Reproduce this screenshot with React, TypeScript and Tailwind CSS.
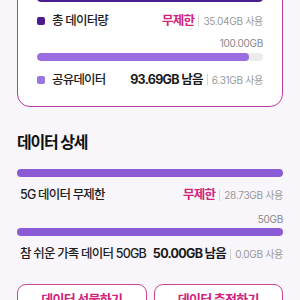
import React from "react";

type Row = {
    label: string;
    swatch?: string;
    main: string;
    mainPink?: boolean;
    used: string;
};

function UsageRow({ row }: { row: Row }) {
    return (
        <div className="flex items-center justify-between h-[20px] leading-[20px] whitespace-nowrap">
            <div className="flex items-center gap-[7px]">
                {row.swatch && <span className={`w-[8px] h-[8px] rounded-[2px] ${row.swatch}`} />}
                <span className="text-[12.5px] font-medium text-[#1e1e1e] tracking-[-0.8px]">{row.label}</span>
            </div>
            <div className="flex items-center">
                <span
                    className={`text-[12.5px] font-bold tracking-[-0.7px] ${
                        row.mainPink ? "text-[#d0237a]" : "text-[#1a1a1a]"
                    }`}
                >
                    {row.main}
                </span>
                <span className="w-px h-[11px] bg-[#d6d6d6] mx-[4px]" />
                <span className="text-[10px] text-[#999] tracking-[-0.3px]">{row.used}</span>
            </div>
        </div>
    );
}

export default function App() {
    return (
        <div
            className="w-[300px] h-[300px] overflow-hidden bg-[#f8f5fb] px-[17px]"
            style={{ fontFamily: 'Inter, "Noto Sans CJK KR", sans-serif' }}
        >
            {/* 상단 카드 */}
            <div className="mt-[-23.5px] bg-white border-[1.5px] border-[#b8399f] rounded-[13px] px-[19px] pt-[16px] pb-[16.5px]">
                <div className="h-[8px] rounded-full bg-[#4a1d93]" />
                <div className="mt-[9px]">
                    <UsageRow
                        row={{ label: "총 데이터량", swatch: "bg-[#4b1a8f]", main: "무제한", mainPink: true, used: "35.04GB 사용" }}
                    />
                </div>
                <div className="mt-[2px] text-right text-[10px] text-[#888] h-[20px] leading-[20px] tracking-[-0.3px]">100.00GB</div>
                <div className="h-[8px] rounded-full bg-[#ececec] overflow-hidden">
                    <div className="h-full w-[94%] rounded-full bg-[#9a6ee0]" />
                </div>
                <div className="mt-[9px]">
                    <UsageRow
                        row={{ label: "공유데이터", swatch: "bg-[#9877e0]", main: "93.69GB 남음", used: "6.31GB 사용" }}
                    />
                </div>
            </div>

            {/* 데이터 상세 */}
            <h2 className="mt-[23px] text-[16px] font-bold text-[#111] tracking-[-1.2px] h-[24px] leading-[24px]">데이터 상세</h2>

            <div className="mt-[15px] h-[8px] rounded-full bg-[#8b5bd6]" />
            <div className="mt-[8px] pl-[3px]">
                <UsageRow row={{ label: "5G 데이터 무제한", main: "무제한", mainPink: true, used: "28.73GB 사용" }} />
            </div>
            <div className="mt-[6px] text-right text-[10px] text-[#888] h-[16px] leading-[16px] tracking-[-0.3px]">50GB</div>
            <div className="mt-[1px] h-[8px] rounded-full bg-[#8b5bd6]" />
            <div className="mt-[8px] pl-[3px]">
                <UsageRow row={{ label: "참 쉬운 가족 데이터 50GB", main: "50.00GB 남음", used: "0.0GB 사용" }} />
            </div>

            {/* 버튼 */}
            <div className="mt-[20px] grid grid-cols-2 gap-[7px]">
                <button className="h-[40px] bg-white border-[1.5px] border-[#c4478f] rounded-[9px] text-[13px] font-bold text-[#d0237a] tracking-[-0.7px] leading-[20px] pt-[4px] self-start flex justify-center">
                    데이터 선물하기
                </button>
                <button className="h-[40px] bg-white border-[1.5px] border-[#c4478f] rounded-[9px] text-[13px] font-bold text-[#d0237a] tracking-[-0.7px] leading-[20px] pt-[4px] self-start flex justify-center">
                    데이터 충전하기
                </button>
            </div>
        </div>
    );
}
